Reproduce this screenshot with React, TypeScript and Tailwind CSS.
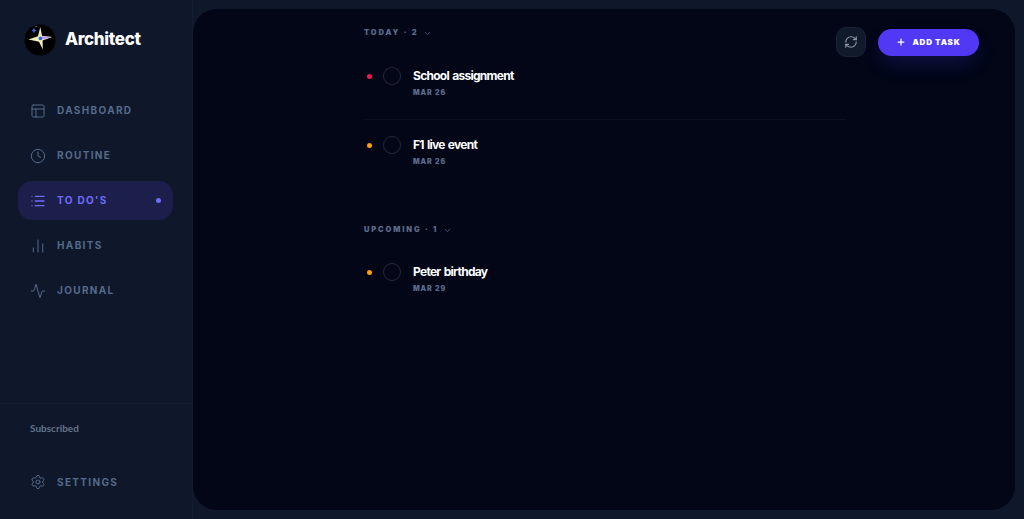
import { ChartNoAxesColumn, Activity, ChevronDown, Clock, PanelsTopLeft, List, Plus, RefreshCw, Settings } from 'lucide-react';
import type { ComponentType } from 'react';

type NavItem = { label: string; icon: ComponentType<{ className?: string; size?: number; strokeWidth?: number }>; active?: boolean };

const NAV: NavItem[] = [
  { label: 'DASHBOARD', icon: PanelsTopLeft },
  { label: 'ROUTINE', icon: Clock },
  { label: "TO DO'S", icon: List, active: true },
  { label: 'HABITS', icon: ChartNoAxesColumn },
  { label: 'JOURNAL', icon: Activity },
];

const TODAY = [
  { title: 'School assignment', date: 'MAR 26', dot: 'bg-[#f5174f]' },
  { title: 'F1 live event', date: 'MAR 26', dot: 'bg-[#fb9f0a]' },
];

function Logo() {
  return (
    <svg width="32" height="32" viewBox="0 0 32 32" className="shrink-0">
      <circle cx="16" cy="16" r="15.5" fill="#000" />
      <path d="M16.3 3 L18 11.8 L28 13 L18.6 16.6 L18.8 25.5 L15 17.8 L4.5 15.6 L14 12.2 Z" fill="#f0eeb4" />
      <path d="M18 12.2 L28 13 L18.4 15.6 Z" fill="#b79be8" />
      <circle cx="16.4" cy="14.4" r="1.8" fill="#2f5cf0" />
      <path d="M10 3.4 L10.8 5.8 L12.6 6.5 L10.8 7.2 L10 9.6 L9.2 7.2 L7.4 6.5 L9.2 5.8 Z" fill="#3f6cf0" />
      <circle cx="12" cy="2.5" r="0.5" fill="#fff" />
    </svg>
  );
}

function NavRow({ item }: { item: NavItem }) {
  const Icon = item.icon;
  return (
    <div className={`flex h-[39px] items-center rounded-[14px] px-3 ${item.active ? 'bg-[#1c1f4a] text-[#6d6cff]' : 'text-[#566a8a]'}`}>
      <Icon size={16} strokeWidth={item.active ? 2 : 1.5} className="shrink-0" />
      <span className="ml-[11px] text-[10px] font-bold tracking-[0.135em]">{item.label}</span>
      {item.active && <span className="ml-auto size-[5px] rounded-full bg-[#6d6cff]" />}
    </div>
  );
}

function TaskRow({ title, date, dot }: { title: string; date: string; dot: string }) {
  return (
    <div className="flex flex-col">
      <div className="flex items-center pl-[3px]">
        <span className={`size-[5px] rounded-full ${dot}`} />
        <span className="ml-[11px] size-[18px] rounded-full border-[1.5px] border-[#252b3a]" />
        <span className="ml-[12px] text-[12px] leading-[16px] font-bold tracking-[-0.06em] [word-spacing:1px] text-white">{title}</span>
      </div>
      <span className="mt-[3px] pl-[49px] text-[7px] leading-[10px] font-black tracking-[0.13em] text-[#5a6b88]">{date}</span>
    </div>
  );
}

function SectionHead({ label }: { label: string }) {
  return (
    <div className="flex items-center gap-[5px] text-[#5a6b88]">
      <span className="text-[7.5px] leading-[10px] font-black tracking-[0.25em]">{label}</span>
      <ChevronDown size={9} strokeWidth={2} />
    </div>
  );
}

export default function App() {
  return (
    <div className="flex h-[519px] w-[1024px] overflow-hidden bg-[#0f172a] font-['Inter',sans-serif]">
      <aside className="flex w-[193px] shrink-0 flex-col border-r border-[#141d30]">
        <div className="flex h-[78px] items-center gap-[9px] pt-[1px] pl-[24px]">
          <Logo />
          <span className="text-[17px] font-extrabold tracking-[-0.02em] text-white">Architect</span>
        </div>
        <nav className="mt-[13px] flex flex-col gap-[6px] pr-[19px] pl-[18px]">
          {NAV.map((item) => (
            <NavRow key={item.label} item={item} />
          ))}
        </nav>
        <div className="mt-auto flex h-[116px] flex-col border-t border-[#141d30]">
          <span className="mt-[17px] pl-[30px] font-['Lato',sans-serif] text-[10px] font-bold text-[#64748b]">Subscribed</span>
          <div className="mt-[38px] flex items-center pl-[30px] text-[#566a8a]">
            <Settings size={16} strokeWidth={1.5} />
            <span className="ml-[11px] text-[10px] font-bold tracking-[0.135em]">SETTINGS</span>
          </div>
        </div>
      </aside>
      <main className="my-[9px] mr-[9px] flex-1 rounded-[24px] bg-[#020617] pl-[171px]">
        <div className="relative flex h-full flex-col pt-[19px] pr-[169px]">
          <SectionHead label="TODAY · 2" />
          <div className="mt-[29px]">
            <TaskRow {...TODAY[0]} />
          </div>
          <div className="mt-[21px] border-t border-[#0a0f1f]" />
          <div className="mt-[16px]">
            <TaskRow {...TODAY[1]} />
          </div>
          <div className="mt-[58px]">
            <SectionHead label="UPCOMING · 1" />
          </div>
          <div className="mt-[28px]">
            <TaskRow title="Peter birthday" date="MAR 29" dot="bg-[#fb9f0a]" />
          </div>
          <div className="absolute top-[18px] right-[36px] flex items-center gap-[12px]">
            <button className="flex size-[30px] items-center justify-center rounded-[10px] border border-[#1a2436] bg-[#111a2a] text-[#8a95a5]">
              <RefreshCw size={14} strokeWidth={2} />
            </button>
            <button className="flex h-[27px] w-[101px] items-center justify-center gap-[6px] rounded-full bg-[#5138f5] text-white shadow-[0_10px_20px_-4px_rgba(81,56,245,0.25)]">
              <Plus size={10} strokeWidth={3} />
              <span className="text-[8px] font-black tracking-[0.1em]">ADD TASK</span>
            </button>
          </div>
        </div>
      </main>
    </div>
  );
}
